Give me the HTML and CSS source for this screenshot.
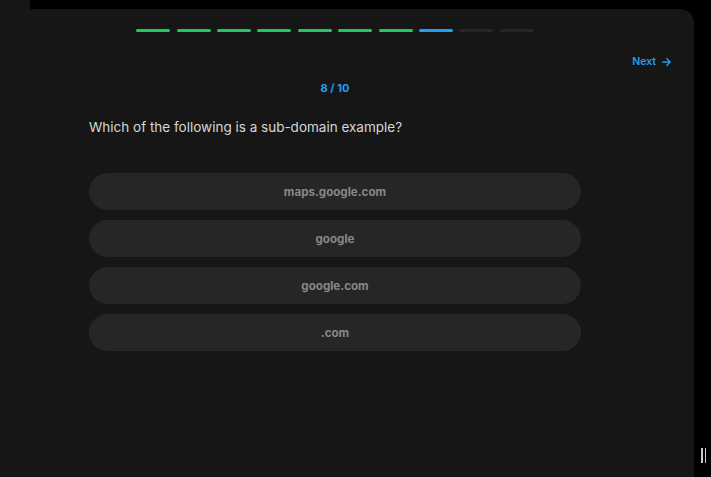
FILE: index.html
```html
<!DOCTYPE html>
<html>
<head>
<meta charset="utf-8">
<link rel="stylesheet" href="styles.css">
</head>
<body>
<div class="page">
  <div class="rail"></div>
  <div class="stage">
    <div class="card">
      <div class="column">
        <div class="progress">
          <span class="seg done"></span>
          <span class="seg done"></span>
          <span class="seg done"></span>
          <span class="seg done"></span>
          <span class="seg done"></span>
          <span class="seg done"></span>
          <span class="seg done"></span>
          <span class="seg current"></span>
          <span class="seg"></span>
          <span class="seg"></span>
        </div>
      </div>
      <div class="navrow">
        <button class="next">Next
          <svg class="arrow" width="9" height="10" viewBox="0 0 9 10"><path d="M0.8 5H8.2M4.8 1.5L8.2 5L4.8 8.5" fill="none" stroke="currentColor" stroke-width="1.3" stroke-linecap="round" stroke-linejoin="round"/></svg>
        </button>
      </div>
      <div class="column">
        <div class="counter">8 / 10</div>
        <p class="question">Which of the following is a sub-domain example?</p>
        <div class="options">
          <button class="option">maps.google.com</button>
          <button class="option">google</button>
          <button class="option">google.com</button>
          <button class="option">.com</button>
        </div>
      </div>
    </div>
  </div>
  <div class="gutter">
    <span class="handle"><i></i><i></i></span>
  </div>
</div>
</body>
</html>
```
FILE: styles.css
```css
* { box-sizing: border-box; }
html, body { margin: 0; padding: 0; background: #000; height: 100%; }
body { font-family: Inter, "Noto Sans", Roboto, sans-serif; overflow: hidden; }

.page { display: flex; height: 477px; }
.rail { width: 30px; background: #161616; flex: none; }
.stage { width: 664px; flex: none; padding-top: 9px; display: flex; }
.card {
  flex: 1;
  background: #161616;
  border-top-right-radius: 14px;
  padding-top: 20px;
}
.column { margin-left: 59px; width: 492px; }

.progress { display: flex; justify-content: center; gap: 6.4px; }
.seg { width: 34px; height: 3px; border-radius: 2px; background: #262626; }
.seg.done { background: #22c55e; }
.seg.current { background: #1f9ff2; }

.navrow { display: flex; justify-content: flex-end; padding-right: 23px; margin-top: 23px; }
.next {
  background: none; border: 0; padding: 0; cursor: pointer;
  font-family: inherit; font-size: 10.5px; font-weight: 600; color: #1f9ff2;
  display: flex; align-items: center; gap: 6px; line-height: 14px;
}
.arrow { display: block; }

.counter {
  text-align: center; color: #1f9ff2; font-size: 11px; font-weight: 700;
  margin-top: 12px; line-height: 14px;
}
.question {
  margin: 23px 0 0; color: #d6d6d6; font-size: 13.5px; line-height: 18px; font-weight: 400;
}
.options { display: flex; flex-direction: column; gap: 10px; margin-top: 37px; }
.option {
  height: 37px; border: 0; border-radius: 19px; background: #262626;
  color: #87888b; font-family: inherit; font-size: 11.6px; font-weight: 700;
  cursor: pointer;
}

.gutter { flex: 1; display: flex; align-items: flex-end; justify-content: center; padding-bottom: 14px; padding-left: 2px; }
.handle { display: flex; gap: 2px; }
.handle i { display: block; width: 1.5px; height: 15px; background: #c8ccd6; }
```
